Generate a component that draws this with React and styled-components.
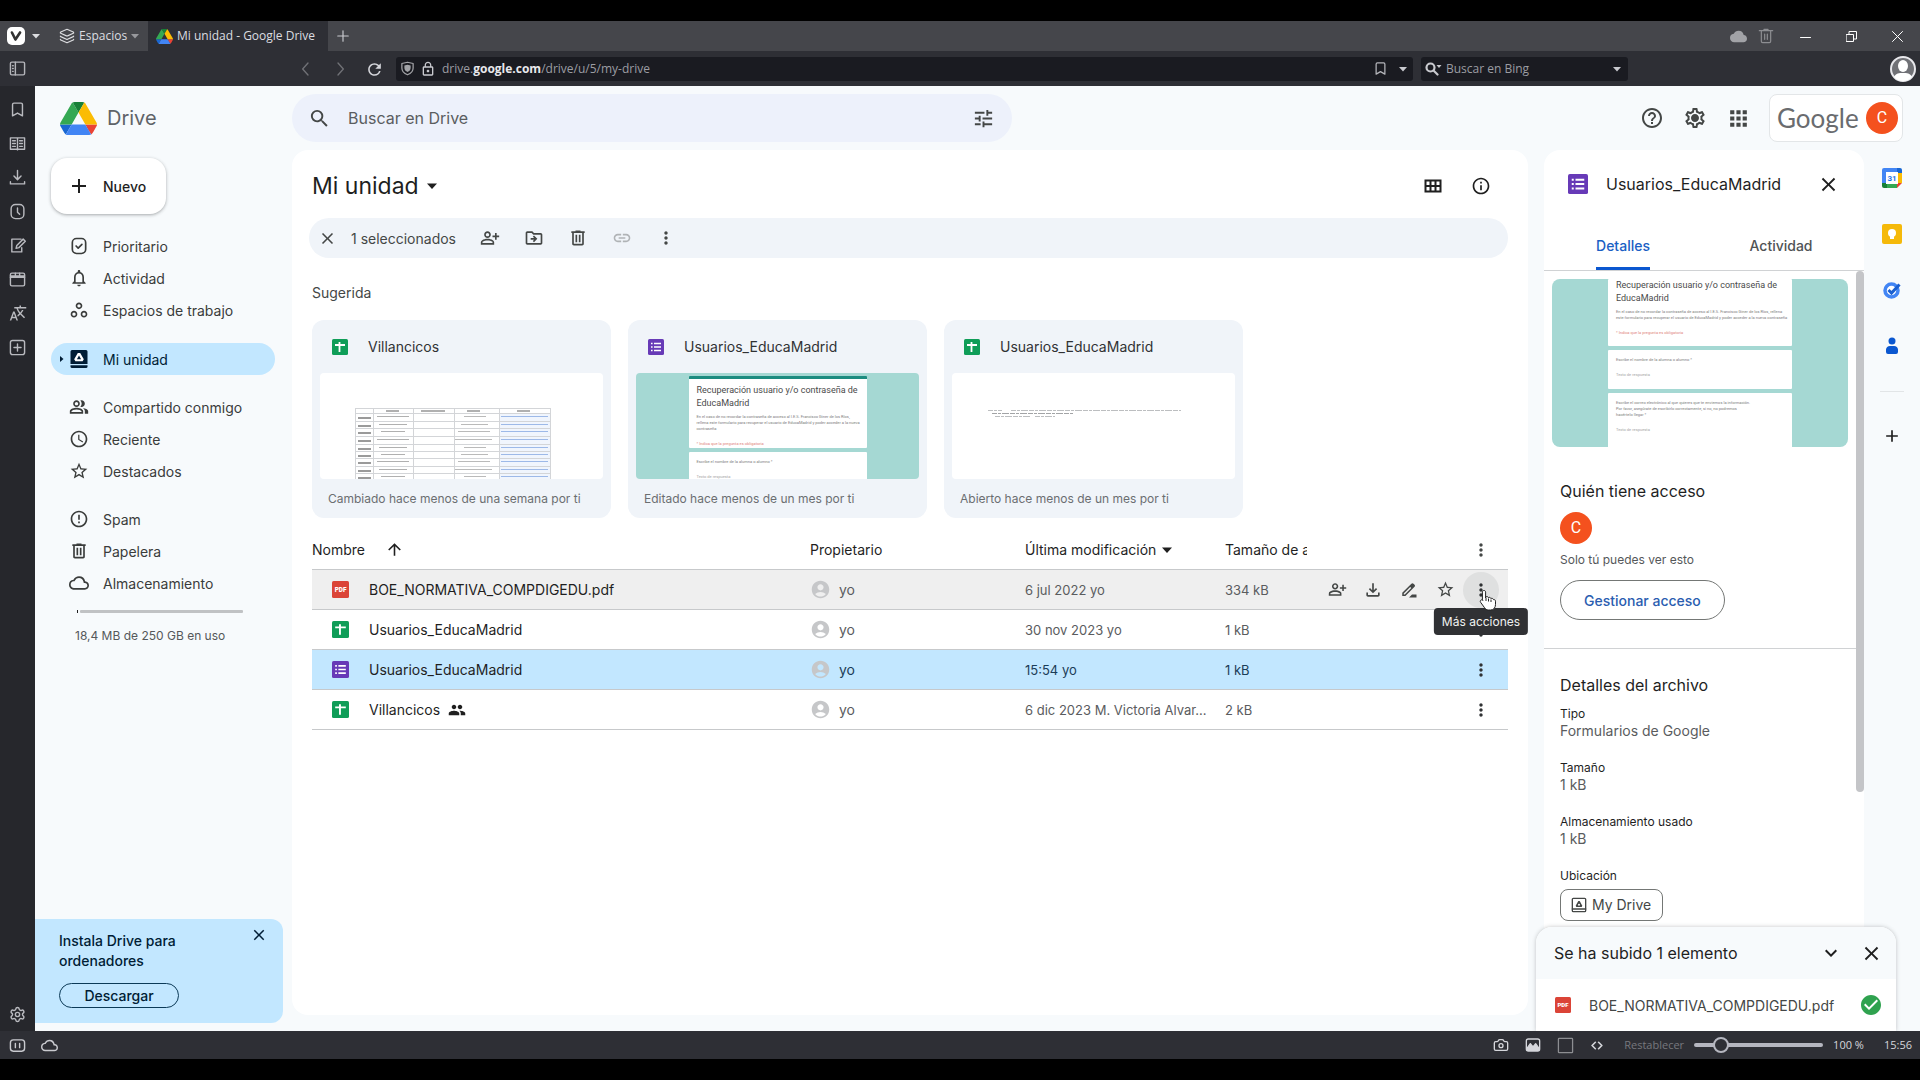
import React from "react";
import styled, { createGlobalStyle, css } from "styled-components";
import {
  MdSearch, MdTune, MdHelpOutline, MdOutlineSettings, MdApps, MdMoreVert, MdClose, MdAdd,
  MdArrowUpward, MdStarBorder, MdAccessTime, MdInfoOutline, MdOutlineFileDownload,
  MdOutlinePeopleAlt, MdPeople, MdNotificationsNone, MdLink, MdErrorOutline, MdCheckCircle,
  MdAccountCircle, MdOutlineCloud, MdCloud, MdOutlineDriveFileMove, MdOutlinePersonAddAlt,
  MdOutlineWorkspaces, MdKeyboardArrowDown, MdTranslate, MdLockOutline, MdRefresh,
} from "react-icons/md";
import { Bookmark, Settings, Layers, Camera } from "lucide-react";

const ui = `Inter, Roboto, "Liberation Sans", sans-serif`;
const chromeFont = `"Open Sans", "Noto Sans", "Liberation Sans", sans-serif`;

const GlobalStyle = createGlobalStyle`
  * { box-sizing: border-box; }
  body { margin: 0; background: #000; font-family: ${ui}; color: #1f1f1f; }
  button, input { font: inherit; color: inherit; }
  button { background: none; border: 0; padding: 0; cursor: pointer; }
  h1, h2, h3, p, dl, dd, ul { margin: 0; padding: 0; }
  ul { list-style: none; }
  a { color: inherit; text-decoration: none; }
  svg { display: block; flex: none; }
`;

/* ---------- shared drawings ---------- */

const Line = ({ size = 16, box = 24, width = 2, children, ...rest }) => (
  <svg width={size} height={size} viewBox={`0 0 ${box} ${box}`} fill="none" stroke="currentColor"
    strokeWidth={width} strokeLinecap="round" strokeLinejoin="round" aria-hidden="true" {...rest}>
    {children}
  </svg>
);

const Solid = ({ size = 20, d, ...rest }) => (
  <svg width={size} height={size} viewBox="0 0 24 24" fill="currentColor" fillRule="evenodd" aria-hidden="true" {...rest}>
    <path d={d} />
  </svg>
);

const TrashIcon = (p) => (
  <Solid {...p} d="M7 21q-.825 0-1.412-.587Q5 19.825 5 19V6H4V4h5V3h6v1h5v2h-1v13q0 .825-.587 1.413Q17.825 21 17 21ZM17 6H7v13h10ZM9 17h2V8H9Zm4 0h2V8h-2Z" />
);

const DriveMark = ({ size }) => (
  <svg width={size} height={size} viewBox="0 0 87.3 78" aria-hidden="true">
    <path d="m6.6 66.85 3.85 6.65c.8 1.4 1.95 2.5 3.3 3.3l13.75-23.8h-27.5c0 1.55.4 3.1 1.2 4.5z" fill="#1967d2" />
    <path d="m43.65 25-13.75-23.8c-1.35.8-2.5 1.9-3.3 3.3l-25.4 44a9.06 9.06 0 0 0 -1.2 4.5h27.5z" fill="#34a853" />
    <path d="m73.55 76.8c1.35-.8 2.5-1.9 3.3-3.3l1.6-2.75 7.65-13.25c.8-1.4 1.2-2.95 1.2-4.5h-27.502l5.852 11.5z" fill="#ea4335" />
    <path d="m43.65 25 13.75-23.8c-1.35-.8-2.9-1.2-4.5-1.2h-18.5c-1.6 0-3.15.45-4.5 1.2z" fill="#188038" />
    <path d="m59.8 53h-32.3l-13.75 23.8c1.35.8 2.9 1.2 4.5 1.2h50.8c1.6 0 3.15-.45 4.5-1.2z" fill="#4285f4" />
    <path d="m73.4 26.5-12.7-22c-.8-1.4-1.95-2.5-3.3-3.3l-13.75 23.8 16.15 28h27.45c0-1.55-.4-3.1-1.2-4.5z" fill="#fbbc04" />
  </svg>
);

const SheetIcon = ({ size = 16 }) => (
  <svg width={size} height={size} viewBox="0 0 16 16" role="img" aria-label="Hoja de cálculo">
    <rect width="16" height="16" rx="1.5" fill="#0f9d58" />
    <path d="M3 6h10M7.5 3v10" stroke="#fff" strokeWidth="1.8" />
  </svg>
);

const FormIcon = ({ size = 16 }) => (
  <svg width={size} height={size} viewBox="0 0 16 16" role="img" aria-label="Formulario">
    <rect width="16" height="16" rx="1.5" fill="#673ab7" />
    <path d="M6 4.5h7M6 8h7M6 11.5h7" stroke="#fff" strokeWidth="1.6" />
    <path d="M3 4.5h1.6M3 8h1.6M3 11.5h1.6" stroke="#fff" strokeWidth="1.6" />
  </svg>
);

const PdfIcon = ({ size = 16 }) => (
  <svg width={size} height={size} viewBox="0 0 16 16" role="img" aria-label="PDF">
    <rect width="16" height="16" rx="1.5" fill="#db4437" />
    <text x="8" y="10.4" textAnchor="middle" fill="#fff" fontSize="6" fontWeight="900" fontFamily="Roboto, sans-serif">PDF</text>
  </svg>
);

const Caret = ({ size = 10 }) => (
  <svg width={size} height={size} viewBox="0 0 10 10" fill="currentColor" aria-hidden="true"><path d="M0 2.5h10L5 8z" /></svg>
);

const IconButton = styled.button`
  display: grid;
  place-items: center;
  width: ${(p) => p.$size || 24}px;
  height: ${(p) => p.$size || 24}px;
  color: ${(p) => p.$color || "#444746"};
  flex: none;
`;

/* ---------- browser window ---------- */

const Window = styled.div`
  height: 100vh;
  min-height: 720px;
  padding: 21px 0;
  display: flex;
  flex-direction: column;
  background: #000;
`;

const TabBar = styled.div`
  height: 30px;
  flex: none;
  display: flex;
  align-items: stretch;
  background: #45464b;
  color: #dcdde0;
  font: 12px/30px ${chromeFont};
`;

const MenuButton = styled.button`
  display: flex;
  align-items: center;
  gap: 7px;
  width: 48px;
  padding-left: 7px;
`;

const VivaldiMark = styled.span`
  display: grid;
  place-items: center;
  width: 18px;
  height: 18px;
  border-radius: 5px;
  background: #fff;
  color: #333;
`;

const Spaces = styled.button`
  display: flex;
  align-items: center;
  gap: 4px;
  width: 100px;
  padding-left: 11px;
  svg:last-child { color: #97989c; }
`;

const Tab = styled.a`
  display: flex;
  align-items: center;
  gap: 4px;
  width: 180px;
  padding-left: 8px;
  background: #2e2f35;
  white-space: nowrap;
`;

const WindowTools = styled.div`
  margin-left: auto;
  display: flex;
  align-items: center;
  padding-right: 14px;
`;

const WindowButtons = styled.div`
  display: flex;
  gap: 28px;
  margin-left: 16px;
`;

const AddressBar = styled.div`
  height: 35px;
  flex: none;
  display: flex;
  align-items: center;
  padding: 0 4px 0 8px;
  background: #2e2f35;
  color: #c9cacf;
  font: 12px/24px ${chromeFont};
`;

const HistoryNav = styled.div`
  display: flex;
  align-items: center;
  gap: 16px;
  margin: 0 13px 0 271px;
`;

const UrlField = styled.div`
  flex: 1;
  height: 24px;
  display: flex;
  align-items: center;
  gap: 4px;
  padding: 0 1px 0 2px;
  border-radius: 3px;
  background: #1a1b21;
`;

const Url = styled.a`
  flex: 1;
  padding-left: 2px;
  color: #9c9da3;
  b { color: #e8e8ec; font-weight: 700; }
`;

const BingField = styled.label`
  display: flex;
  align-items: center;
  gap: 4px;
  width: 207px;
  height: 24px;
  margin: 0 262px 0 8px;
  padding: 0 7px 0 4px;
  border-radius: 3px;
  background: #1a1b21;
  input {
    flex: 1;
    min-width: 0;
    padding: 0;
    border: 0;
    outline: 0;
    background: none;
    &::placeholder { color: #9c9da3; opacity: 1; }
  }
`;

const Middle = styled.div`
  flex: 1;
  min-height: 0;
  display: flex;
`;

const SidePanel = styled.nav`
  width: 35px;
  flex: none;
  display: flex;
  flex-direction: column;
  align-items: center;
  gap: 14px;
  padding: 13px 0 7px;
  background: #26272c;
  > :last-child { margin-top: auto; }
`;

const Mirrored = styled.span`
  transform: scaleX(-1);
`;

const StatusBar = styled.footer`
  height: 28px;
  flex: none;
  display: flex;
  align-items: center;
  gap: 12px;
  padding: 0 8px 0 7px;
  background: #2e2f35;
  color: #d5d6db;
  font: 11px/28px ${chromeFont};
`;

const StatusRight = styled.div`
  margin-left: auto;
  display: flex;
  align-items: center;
  gap: 10px;
`;

const Reset = styled.button`
  margin-left: 6px;
  color: #77787e;
`;

const Clock = styled.time`
  margin-left: 10px;
`;

const ZoomSlider = styled.input`
  appearance: none;
  width: 129px;
  height: 16px;
  margin: 0;
  background: none;
  &::-webkit-slider-runnable-track { height: 4px; border-radius: 2px; background: #b5b6bf; }
  &::-webkit-slider-thumb {
    appearance: none;
    width: 16px;
    height: 16px;
    margin-top: -6px;
    border: 2px solid #b5b6bf;
    border-radius: 50%;
    background: #2e2f35;
  }
`;

/* ---------- Drive page ---------- */

const Page = styled.div`
  position: relative;
  flex: 1;
  min-width: 0;
  display: flex;
  flex-direction: column;
  overflow: hidden;
  background: #f7fafc;
`;

const Header = styled.header`
  height: 64px;
  flex: none;
  display: flex;
  align-items: center;
  padding-right: 17px;
`;

const Brand = styled.a`
  width: 257px;
  flex: none;
  display: flex;
  align-items: center;
  gap: 10px;
  padding-left: 25px;
  color: #5f6368;
  font-size: 20px;
`;

const SearchBox = styled.label`
  flex: 0 1 720px;
  height: 48px;
  display: flex;
  align-items: center;
  gap: 17px;
  padding: 0 17px 0 16px;
  border-radius: 24px;
  background: #edf1fb;
  color: #444746;
  input {
    flex: 1;
    min-width: 0;
    padding: 0;
    border: 0;
    outline: 0;
    background: none;
    font-size: 16px;
    &::placeholder { color: #5a5d60; opacity: 1; }
  }
`;

const HeaderTools = styled.div`
  display: flex;
  align-items: center;
  gap: 19px;
  margin-left: auto;
`;

const AccountCard = styled.a`
  display: flex;
  align-items: center;
  justify-content: space-between;
  width: 134px;
  height: 48px;
  padding: 0 4px 0 7px;
  border: 1px solid #e3e6e8;
  border-radius: 8px;
  background: #fff;
  color: #6a6c6f;
  font: 26px/32px Lato, sans-serif;
`;

const Avatar = styled.span`
  display: grid;
  place-items: center;
  width: 32px;
  height: 32px;
  border-radius: 50%;
  background: #f4511e;
  color: #fff;
  font: 16px/32px Roboto, sans-serif;
`;

const Body = styled.div`
  flex: 1;
  min-height: 0;
  display: flex;
`;

const Aside = styled.aside`
  width: 257px;
  flex: none;
  display: flex;
  flex-direction: column;
  padding: 8px 0;
`;

const NewButton = styled.button`
  align-self: flex-start;
  display: flex;
  align-items: center;
  gap: 12px;
  height: 56px;
  margin: 0 0 16px 16px;
  padding: 0 20px 0 16px;
  border-radius: 16px;
  background: #fff;
  box-shadow: 0 1px 3px rgba(60, 64, 67, 0.35), 0 1px 4px rgba(60, 64, 67, 0.1);
  font-size: 14px;
  font-weight: 500;
`;

const NavGroup = styled.ul`
  margin: 0 17px 16px 16px;
  &:last-of-type { margin-bottom: 0; }
  &:first-of-type { margin-bottom: 17px; }
`;

const NavLink = styled.a`
  display: grid;
  grid-template-columns: 18px 20px 1fr;
  align-items: center;
  height: 32px;
  border-radius: 16px;
  color: ${(p) => (p.$active ? "#001d35" : "#3a3c3b")};
  background: ${(p) => (p.$active ? "#c2e7ff" : "none")};
  font-size: 14px;
  svg { justify-self: center; }
  > span:last-child { padding-left: 14px; }
`;

const Storage = styled.div`
  margin: 11px 49px 0 40px;
  font-size: 12px;
  line-height: 20px;
  color: #55585a;
`;

const Meter = styled.div`
  display: flex;
  gap: 2px;
  height: 3px;
  margin: 0 0 13px 2px;
  &::before { content: ""; width: 1px; background: #1f1f1f; }
  &::after { content: ""; flex: 1; background: #c0c2c4; border-radius: 1px; }
`;

const Promo = styled.section`
  display: grid;
  grid-template-columns: 1fr auto;
  align-items: start;
  margin: auto 9px 0 0;
  padding: 12px 12px 15px 24px;
  border-radius: 0 12px 12px 0;
  background: #c2e7ff;
  color: #001d35;
  font-size: 14px;
  font-weight: 500;
  line-height: 20px;
  p { max-width: 150px; }
  > button { margin-top: -8px; }
`;

const PromoButton = styled.a`
  width: 120px;
  height: 25px;
  margin-top: 12px;
  border: 1px solid #0b3a57;
  border-radius: 13px;
  line-height: 23px;
  text-align: center;
`;

const Main = styled.main`
  flex: 1;
  min-width: 0;
  margin-bottom: 16px;
  padding: 4px 20px;
  border-radius: 16px;
  background: #fff;
`;

const TitleRow = styled.div`
  display: flex;
  align-items: center;
  gap: 24px;
  height: 64px;
  padding-right: 15px;
`;

const Crumb = styled.button`
  display: flex;
  align-items: center;
  gap: 8px;
  margin-right: auto;
  font-size: 23px;
`;

const Selection = styled.div`
  display: flex;
  align-items: center;
  gap: 24px;
  height: 40px;
  margin-left: -3px;
  padding-left: 8px;
  border-radius: 20px;
  background: #f0f4f9;
  color: #444746;
  font-size: 14px;
`;

const Count = styled.div`
  display: flex;
  align-items: center;
  gap: 14px;
`;

const SectionTitle = styled.h2`
  height: 62px;
  padding-top: 6px;
  font-size: 14px;
  font-weight: 400;
  line-height: 58px;
  color: #444746;
`;

const Cards = styled.div`
  display: flex;
  gap: 17px;
  margin-bottom: 12px;
`;

const Card = styled.article`
  width: 299px;
  padding: 0 8px;
  border-radius: 12px;
  background: #f0f4f9;
  h3 {
    display: flex;
    align-items: center;
    gap: 20px;
    height: 53px;
    padding-left: 12px;
    font-size: 14px;
    font-weight: 400;
    color: #303234;
  }
  p {
    padding-left: 8px;
    font-size: 12px;
    line-height: 39px;
    color: #6b6e71;
  }
`;

const Thumb = styled.div`
  height: 106px;
  overflow: hidden;
  border-radius: 4px;
  background: ${(p) => p.$color || "#fff"};
`;

const FormPage = styled.div`
  display: flex;
  flex-direction: column;
  gap: 4px;
  width: ${(p) => p.$width}px;
  margin: ${(p) => p.$top}px auto 0;
  color: #7c7c7c;
  font: 4px/6px Roboto, sans-serif;
`;

const FormBlock = styled.div`
  height: ${(p) => p.$height}px;
  padding: ${(p) => p.$pad}px 4px 0 8px;
  border-radius: 1px;
  background: #fff;
  ${(p) => p.$banner && css`border-top: 3px solid #1c8c80;`}
`;

const FormTitle = styled.div`
  margin-bottom: 4px;
  color: #4a4a4a;
  font-size: 9px;
  line-height: 13px;
  white-space: nowrap;
`;

const FormNote = styled.div`
  margin-top: 9px;
  color: ${(p) => (p.$required ? "#e0827a" : "#a5a5a5")};
`;

/* ---------- file table ---------- */

const Table = styled.table`
  width: 100%;
  table-layout: fixed;
  border-collapse: separate;
  border-spacing: 0;
  font-size: 14px;
`;

const Col = styled.col`
  width: ${(p) => (p.$width ? `${p.$width}px` : "auto")};
`;

const Head = styled.th`
  height: 40px;
  padding: 0;
  border-bottom: 1px solid #c7c9cb;
  font-weight: 400;
  text-align: left;
  white-space: nowrap;
  overflow: hidden;
  color: #1f1f1f;
`;

const Row = styled.tr`
  background: ${(p) => (p.$state === "selected" ? "#c2e7ff" : p.$state === "hover" ? "#efefef" : "none")};
  color: ${(p) => (p.$state === "selected" ? "#1b3d57" : "#5a5c5e")};
`;

const Cell = styled.td`
  height: 40px;
  padding: 0;
  border-bottom: 1px solid #c7c9cb;
  white-space: nowrap;
  ${(p) => p.$meta && css`font-size: 13px;`}
`;

const Inline = styled.span`
  display: flex;
  align-items: center;
  gap: ${(p) => p.$gap || 8}px;
`;

const FileName = styled(Inline)`
  padding-left: 20px;
  color: #1f1f1f;
`;

const Actions = styled.div`
  display: flex;
  align-items: center;
  justify-content: flex-end;
  gap: 12px;
  padding-right: 15px;
`;

const MoreWrap = styled.span`
  position: relative;
  width: 24px;
  height: 24px;
`;

const Halo = styled.span`
  position: absolute;
  inset: -6px;
  border-radius: 50%;
  background: #dfe0e0;
`;

const MoreIcon = styled(IconButton)`
  position: relative;
`;

const Tooltip = styled.span`
  position: absolute;
  z-index: 2;
  top: 30px;
  left: 50%;
  transform: translateX(-50%);
  padding: 0 8px;
  border-radius: 4px;
  background: #303134;
  color: #f1f1f1;
  font-size: 12px;
  line-height: 27px;
`;

const Pointer = styled.svg`
  position: absolute;
  z-index: 3;
  top: 11px;
  left: 10px;
`;

/* ---------- details ---------- */

const Details = styled.section`
  width: 320px;
  flex: none;
  display: flex;
  flex-direction: column;
  min-height: 0;
  margin: 0 0 16px 16px;
  border-radius: 16px;
  background: #fff;
  overflow: hidden;
`;

const DetailsHead = styled.div`
  height: 68px;
  flex: none;
  display: flex;
  align-items: center;
  gap: 18px;
  padding: 0 24px;
  h2 { flex: 1; font-size: 16px; font-weight: 400; }
`;

const Tabs = styled.div`
  flex: none;
  display: flex;
  height: 53px;
  padding-right: 4px;
  border-bottom: 1px solid #d0d2d4;
`;

const TabButton = styled.button`
  flex: 1;
  display: flex;
  justify-content: center;
  font-size: 14px;
  font-weight: 500;
  color: ${(p) => (p.$active ? "#1a5fc4" : "#505355")};
  span {
    height: 100%;
    line-height: 56px;
    border-bottom: 3px solid ${(p) => (p.$active ? "#0b57d0" : "transparent")};
  }
`;

const Scroller = styled.div`
  flex: 1;
  min-height: 0;
  display: flex;
`;

const ScrollBody = styled.div`
  flex: 1;
  overflow: hidden;
`;

const ScrollThumb = styled.div`
  width: 8px;
  height: 70%;
  border-radius: 4px;
  background: #c4c5c8;
`;

const Preview = styled(Thumb)`
  height: 168px;
  margin: 8px 8px 32px;
  border-radius: 8px;
`;

const Section = styled.div`
  padding: 0 16px;
  h3 { font-size: 16px; font-weight: 400; line-height: 24px; color: #1f1f1f; }
`;

const Access = styled(Section)`
  padding-bottom: 28px;
  border-bottom: 1px solid #d0d2d4;
  margin-bottom: 24px;
  > span { margin: 9px 0 8px; }
  p { font-size: 12px; line-height: 16px; color: #55585a; }
`;

const ManageButton = styled.button`
  height: 40px;
  margin-top: 12px;
  padding: 0 23px;
  border: 1px solid #747775;
  border-radius: 20px;
  color: #2a5db0;
  font-size: 14px;
  font-weight: 500;
`;

const Facts = styled.dl`
  margin-top: 9px;
  dt { font-size: 12px; line-height: 16px; color: #1f1f1f; }
  dd { margin-bottom: 20px; font-size: 14px; line-height: 18px; color: #5a5c5e; }
`;

const Chip = styled.button`
  display: flex;
  align-items: center;
  gap: 5px;
  height: 32px;
  margin-top: 5px;
  padding: 0 11px 0 10px;
  border: 1px solid #747775;
  border-radius: 8px;
  color: #444746;
`;

const AppStrip = styled.nav`
  width: 56px;
  flex: none;
  display: flex;
  flex-direction: column;
  align-items: center;
  gap: 36px;
  padding-top: 18px;
`;

const Rule = styled.hr`
  width: 24px;
  margin: -1px 0 -2px;
  border: 0;
  border-top: 1px solid #e2e5e7;
`;

const Toast = styled.section`
  position: absolute;
  right: 24px;
  bottom: 0;
  width: 360px;
  border-radius: 16px 16px 0 0;
  background: #fff;
  box-shadow: 0 0 4px rgba(60, 64, 67, 0.3);
`;

const ToastHead = styled.div`
  display: flex;
  align-items: center;
  gap: 16px;
  height: 52px;
  padding: 0 13px 0 18px;
  border-radius: 16px 16px 0 0;
  background: #f7fafc;
  h2 { flex: 1; font-size: 16px; font-weight: 400; color: #1f1f1f; }
`;

const ToastRow = styled.div`
  display: flex;
  align-items: center;
  gap: 18px;
  height: 52px;
  padding: 0 13px 0 19px;
  font-size: 14px;
  color: #444746;
  span { flex: 1; }
`;

/* ---------- icons drawn for this page ---------- */

const MyDriveFilled = () => (
  <svg width="18" height="20" viewBox="0 0 18 20" aria-hidden="true">
    <path d="M2 1h14a1.5 1.5 0 0 1 1.500 1.500V15H.5V2.500A1.500 1.500 0 0 1 2 1z" fill="#001d35" />
    <path d="M.5 16.300h17v1.200A1.500 1.500 0 0 1 16 19H2a1.500 1.500 0 0 1-1.500-1.500z" fill="#001d35" />
    <path d="M7.800 4h2.400l3.600 6.300-1.200 2H5.400l-1.200-2zM9 6.400 6.900 10.200h4.200z" fill="#fff" fillRule="evenodd" />
  </svg>
);

const MyDriveOutline = () => (
  <Line size={16} width={2}>
    <rect x="2" y="2" width="20" height="20" rx="1.500" />
    <path d="M2 18h20" />
    <path d="M11 6h2l4 7-1 2H8l-1-2z" fill="currentColor" stroke="none" />
    <circle cx="12" cy="11.500" r="1.500" fill="#fff" stroke="none" />
  </Line>
);

const PriorityIcon = () => (
  <Line size={20} width={2}><rect x="4" y="3" width="16" height="18" rx="5" /><path d="m8.500 12 2.500 2.500 4.500-4.500" /></Line>
);

const GearDot = () => (
  <svg width="24" height="24" viewBox="0 0 24 24" aria-hidden="true">
    <MdOutlineSettings size={24} />
    <circle cx="12" cy="12" r="3" fill="currentColor" />
  </svg>
);

const GridIcon = () => (
  <svg width="18" height="18" viewBox="0 0 18 18" fill="none" stroke="currentColor" strokeWidth="2" aria-hidden="true">
    <path d="M1.500 3.500h15v11h-15zM1.500 9h15M6.500 3.500v11M11.500 3.500v11" />
  </svg>
);

const EditLineIcon = () => (
  <Solid size={18} d="M12 22l4-4h6v4zM5 18h1.400l8.600-8.600L13.600 8 5 16.600zm-2 2v-4.200L15.200 3.600q.6-.6 1.400-.6t1.400.6l1.400 1.400q.6.6.6 1.400t-.6 1.400L7.200 20z" />
);

const BingSearchIcon = () => (
  <svg width="17" height="14" viewBox="0 0 17 14" fill="none" stroke="currentColor" strokeWidth="2.200" aria-hidden="true">
    <circle cx="5.500" cy="5.500" r="4" /><path d="m8.500 8.500 4 4" strokeLinecap="round" />
    <path d="M11.500 3h5L14 6z" fill="currentColor" stroke="none" />
  </svg>
);

const Hand = () => (
  <Pointer width="18" height="22" viewBox="0 0 18 22" aria-hidden="true">
    <path d="M5 1.500c1 0 1.600.7 1.600 1.600V9l.3-1.200c1-.6 2.200-.2 2.500.8 1-.6 2.200-.1 2.500.9 1-.5 2.300 0 2.600 1.100 1.200-.2 2 .5 2 1.600v3.200c0 3.200-1.700 5.600-4.900 5.600H9.400c-1.700 0-2.900-.9-3.800-2.200l-4-5.500c-.6-.9-.4-1.800.3-2.200.7-.5 1.500-.2 2.100.4l-.6-.7V3.100c0-.9.700-1.600 1.600-1.600z"
      fill="#fff" stroke="#222" strokeWidth="1" />
    <path d="M7 9v3M9.500 9.500v3M12 10.500v2.500" stroke="#222" strokeWidth="1" />
  </Pointer>
);

const CalendarApp = () => (
  <svg width="20" height="20" viewBox="0 0 20 20" role="img" aria-label="Calendar">
    <path d="M0 2a2 2 0 0 1 2-2h13v5H5v10H0z" fill="#4285f4" />
    <path d="M15 0h3a2 2 0 0 1 2 2v3h-5z" fill="#1967d2" />
    <path d="M15 5h5v10h-5z" fill="#fbbc04" />
    <path d="M5 15h10v5H5z" fill="#34a853" />
    <path d="M0 15h5v5H2a2 2 0 0 1-2-2z" fill="#188038" />
    <path d="M15 15h5l-5 5z" fill="#ea4335" />
    <rect x="4" y="4" width="12" height="12" fill="#fff" />
    <text x="10" y="13" textAnchor="middle" fontSize="8" fontWeight="700" fill="#1a73e8" fontFamily="Roboto, sans-serif">31</text>
  </svg>
);

const KeepApp = () => (
  <svg width="20" height="20" viewBox="0 0 20 20" role="img" aria-label="Keep">
    <rect width="20" height="20" rx="2" fill="#f5b90a" />
    <circle cx="10" cy="9" r="4" fill="#fff" /><path d="M8 12h4v3H8z" fill="#fff" />
  </svg>
);

const TasksApp = () => (
  <svg width="20" height="20" viewBox="0 0 20 20" role="img" aria-label="Tasks">
    <circle cx="9.500" cy="10.500" r="6.500" fill="#fff" stroke="#4285f4" strokeWidth="3.500" />
    <path d="m6.500 10 3 3L17.500 4.500" fill="none" stroke="#1a5fd0" strokeWidth="3" />
  </svg>
);

const ContactsApp = () => (
  <svg width="20" height="20" viewBox="0 0 20 20" fill="#0b57d0" role="img" aria-label="Contactos">
    <circle cx="10" cy="5" r="3.500" /><path d="M4 13.500a4 4 0 0 1 4-3.500h4a4 4 0 0 1 4 3.500V16a2 2 0 0 1-2 2H6a2 2 0 0 1-2-2z" />
  </svg>
);

const SheetPreview = () => {
  const cols = [35, 53, 93, 134, 179, 230];
  const rows = [35, 40, 48, 55, 63, 71, 78, 85, 93, 100];
  return (
    <svg width="283" height="106" viewBox="0 0 283 106" aria-hidden="true">
      <rect x="179" y="40" width="51" height="66" fill="#f0f5fd" />
      <path d={cols.map((x) => `M${x}.5 35V106`).join("") + rows.map((y) => `M35 ${y}.5H231`).join("")} stroke="#d3d5d8" strokeWidth="1" fill="none" />
      {[66, 101, 147, 197].map((x, i) => <rect key={x} x={x} y="37" width={i === 1 ? 24 : 13} height="2" fill="#b0b0b0" />)}
      {rows.slice(1).map((y, i) => (
        <g key={y}>
          <rect x="38" y={y + 4} width="13" height="2" fill="#9a9a9a" />
          <rect x={57 + (i % 3) * 2} y={y + 3} width={32 - (i % 3) * 4} height="1" fill="#b0b0b0" />
          <rect x={144 - (i % 4) * 3} y={y + 3} width={22 + (i % 4) * 5} height="1" fill="#bababa" />
          <rect x="181" y={y + 3} width="47" height="1" fill="#9db9e8" />
        </g>
      ))}
    </svg>
  );
};

const ListPreview = () => (
  <svg width="283" height="106" viewBox="0 0 283 106" aria-hidden="true">
    <g stroke="#bcbec0" strokeWidth="1" strokeDasharray="5 1 3 1 7 1">
      <path d="M36 37.500h14M59 37.500h170" /><path d="M40 40.500h82" stroke="#a2a4a6" /><path d="M43 43.500h36M83 43.500h20" />
    </g>
  </svg>
);

/* ---------- data ---------- */

const nav = [
  [
    { label: "Prioritario", icon: <PriorityIcon /> },
    { label: "Actividad", icon: <MdNotificationsNone size={20} /> },
    { label: "Espacios de trabajo", icon: <MdOutlineWorkspaces size={20} /> },
  ],
  [{ label: "Mi unidad", icon: <MyDriveFilled />, active: true }],
  [
    { label: "Compartido conmigo", icon: <MdOutlinePeopleAlt size={20} /> },
    { label: "Reciente", icon: <MdAccessTime size={20} /> },
    { label: "Destacados", icon: <MdStarBorder size={20} /> },
  ],
  [
    { label: "Spam", icon: <MdErrorOutline size={20} /> },
    { label: "Papelera", icon: <TrashIcon size={20} /> },
    { label: "Almacenamiento", icon: <MdOutlineCloud size={20} /> },
  ],
];

const files = [
  { name: "BOE_NORMATIVA_COMPDIGEDU.pdf", icon: PdfIcon, date: "6 jul 2022", by: "yo", size: "334 kB", state: "hover" },
  { name: "Usuarios_EducaMadrid", icon: SheetIcon, date: "30 nov 2023", by: "yo", size: "1 kB" },
  { name: "Usuarios_EducaMadrid", icon: FormIcon, date: "15:54", by: "yo", size: "1 kB", state: "selected" },
  { name: "Villancicos", icon: SheetIcon, date: "6 dic 2023", by: "M. Victoria Alvar...", size: "2 kB", shared: true },
];

const FormDocument = ({ width, top, banner }) => (
  <FormPage $width={width} $top={top}>
    <FormBlock $height={banner ? 72 : 67} $pad={banner ? 5 : 0} $banner={banner}>
      <FormTitle>Recuperación usuario y/o contraseña de<br />EducaMadrid</FormTitle>
      En el caso de no recordar la contraseña de acceso al I.E.S. Francisco Giner de los Ríos, rellena este formulario para recuperar el usuario de EducaMadrid y poder acceder a la nueva contraseña
      <FormNote $required>* Indica que la pregunta es obligatoria</FormNote>
    </FormBlock>
    <FormBlock $height={39} $pad={7}>
      Escribe el nombre de la alumna o alumno *
      <FormNote>Texto de respuesta</FormNote>
    </FormBlock>
    {!banner && (
      <FormBlock $height={60} $pad={7}>
        Escribe el correo electrónico al que quieres que te enviemos la información.<br />
        Por favor, asegúrate de escribirlo correctamente, si no, no podremos<br />
        hacértelo llegar *
        <FormNote>Texto de respuesta</FormNote>
      </FormBlock>
    )}
  </FormPage>
);

export default function App() {
  return (
    <>
      <GlobalStyle />
      <Window>
        <TabBar>
          <MenuButton aria-label="Vivaldi">
            <VivaldiMark><Line size={14} width={4.5}><path d="m5 6 6 12 M11 18 19 6" /></Line></VivaldiMark>
            <Caret size={8} />
          </MenuButton>
          <Spaces><Layers size={16} strokeWidth={1.75} />Espacios<Caret size={8} /></Spaces>
          <Tab href="#tab"><DriveMark size={17} />Mi unidad - Google Drive</Tab>
          <IconButton $size={30} $color="#c9cacf" aria-label="Nueva pestaña"><Line size={14} width={2}><path d="M12 3v18M3 12h18" /></Line></IconButton>
          <WindowTools>
            <IconButton $size={28} $color="#a2a3a7" aria-label="Sincronización"><MdCloud size={17} /></IconButton>
            <IconButton $size={28} $color="#8d8e92" aria-label="Pestañas cerradas">
              <Line size={16} width={1.8}><path d="M2 4h20M9 4V2h6v2M5 4v16a2 2 0 0 0 2 2h10a2 2 0 0 0 2-2V4M10 9v8M14 9v8" /></Line>
            </IconButton>
            <WindowButtons>
              <IconButton $size={18} $color="#fff" aria-label="Minimizar"><Line size={11} box={11} width={1}><path d="M.5 6.500h10" /></Line></IconButton>
              <IconButton $size={18} $color="#fff" aria-label="Restaurar"><Line size={11} box={11} width={1}><path d="M.5 3.500h7v7h-7zM3 3.500V.5h7.500V8H7.500" /></Line></IconButton>
              <IconButton $size={18} $color="#fff" aria-label="Cerrar"><Line size={11} box={11} width={1}><path d="m.5.5 10 10M10.500.5l-10 10" /></Line></IconButton>
            </WindowButtons>
          </WindowTools>
        </TabBar>

        <AddressBar>
          <IconButton $size={18} $color="#b4b5ba" aria-label="Panel">
            <Line size={17} width={2}><rect x="2" y="3" width="20" height="18" rx="2" /><path d="M9 3v18M5 8h1M5 12h1M5 16h1" /></Line>
          </IconButton>
          <HistoryNav>
            <IconButton $size={18} $color="#707176" aria-label="Atrás"><Line size={16}><path d="m15 3-8 9 8 9" /></Line></IconButton>
            <IconButton $size={18} $color="#707176" aria-label="Adelante"><Line size={16}><path d="m9 3 8 9-8 9" /></Line></IconButton>
            <IconButton $size={18} $color="#d5d6db" aria-label="Recargar"><MdRefresh size={19} /></IconButton>
          </HistoryNav>
          <UrlField>
            <IconButton $size={18} $color="#a2a3a7" aria-label="Bloqueador">
              <Line size={15}><path d="M12 2 3 4v7c0 5 4 9 9 11 5-2 9-6 9-11V4z" /><path d="M12 6 7 7v4c0 3 2 5 5 6.500 3-1.500 5-3.500 5-6.500V7z" fill="currentColor" stroke="none" /></Line>
            </IconButton>
            <MdLockOutline size={16} />
            <Url href="#url">drive.<b>google.com</b>/drive/u/5/my-drive</Url>
            <IconButton $size={20} $color="#b4b5ba" aria-label="Guardar marcador"><Bookmark size={15} /></IconButton>
            <IconButton $size={18} $color="#c9cacf" aria-label="Historial de direcciones"><Caret size={8} /></IconButton>
          </UrlField>
          <BingField>
            <BingSearchIcon />
            <input placeholder="Buscar en Bing" aria-label="Buscar en Bing" />
            <Caret size={8} />
          </BingField>
          <svg width="26" height="26" viewBox="0 0 26 26" role="img" aria-label="Perfil">
            <circle cx="13" cy="13" r="12" fill="#707176" stroke="#e8e8ec" strokeWidth="2" />
            <ellipse cx="13" cy="10" rx="5" ry="6" fill="#fff" />
            <path d="M4 21c2-4 5-4 9-4s7 0 9 4a12 12 0 0 1-18 0z" fill="#fff" />
          </svg>
        </AddressBar>

        <Middle>
          <SidePanel aria-label="Paneles">
            <IconButton $size={20} $color="#b9babf" aria-label="Marcadores"><Bookmark size={17} /></IconButton>
            <IconButton $size={20} $color="#b9babf" aria-label="Lista de lectura">
              <Line size={17}><path d="M2 4h20v16H2zM12 4v17M5 8h4M5 12h4M5 16h4M15 8h4M15 12h4M15 16h4" /></Line>
            </IconButton>
            <IconButton $size={20} $color="#b9babf" aria-label="Descargas"><Line size={17}><path d="M12 2v13M7 10l5 5 5-5M2 18v3h20v-3" /></Line></IconButton>
            <IconButton $size={20} $color="#b9babf" aria-label="Historial"><Line size={17}><rect x="3" y="2" width="18" height="20" rx="6" /><path d="M12 7v6l3 3" /></Line></IconButton>
            <IconButton $size={20} $color="#b9babf" aria-label="Notas"><Line size={17}><path d="M17 3H4v18h14v-6" /><path d="m10 16 1-4 9-9 3 3-9 9z" /></Line></IconButton>
            <IconButton $size={20} $color="#b9babf" aria-label="Ventana"><Line size={17}><rect x="2" y="3" width="20" height="18" rx="2" /><path d="M2 9h20M2 7h20M9 3v4M15 3v4" /></Line></IconButton>
            <IconButton $size={20} $color="#b9babf" aria-label="Traducir"><Mirrored><MdTranslate size={18} /></Mirrored></IconButton>
            <IconButton $size={20} $color="#b9babf" aria-label="Añadir panel"><Line size={17}><rect x="2" y="2" width="20" height="20" rx="3" /><path d="M12 7v10M7 12h10" /></Line></IconButton>
            <IconButton $size={20} $color="#b9babf" aria-label="Ajustes"><Settings size={17} /></IconButton>
          </SidePanel>

          <Page>
            <Header>
              <Brand href="#drive"><DriveMark size={37} />Drive</Brand>
              <SearchBox>
                <MdSearch size={23} />
                <input placeholder="Buscar en Drive" aria-label="Buscar en Drive" />
                <MdTune size={23} />
              </SearchBox>
              <HeaderTools>
                <IconButton aria-label="Ayuda"><MdHelpOutline size={24} /></IconButton>
                <IconButton aria-label="Configuración"><GearDot /></IconButton>
                <IconButton aria-label="Aplicaciones"><MdApps size={25} /></IconButton>
                <AccountCard href="#account">Google<Avatar>C</Avatar></AccountCard>
              </HeaderTools>
            </Header>

            <Body>
              <Aside>
                <NewButton><MdAdd size={24} />Nuevo</NewButton>
                {nav.map((group) => (
                  <NavGroup key={group[0].label}>
                    {group.map((item) => (
                      <li key={item.label}>
                        <NavLink href="#nav" $active={item.active}>
                          <span>{item.active && <svg width="18" height="8" viewBox="0 0 18 8" aria-hidden="true"><path d="M9 1v6l3.500-3z" fill="#001d35" /></svg>}</span>
                          {item.icon}
                          <span>{item.label}</span>
                        </NavLink>
                      </li>
                    ))}
                  </NavGroup>
                ))}
                <Storage><Meter />18,4 MB de 250 GB en uso</Storage>
                <Promo>
                  <p>Instala Drive para ordenadores</p>
                  <IconButton $size={24} $color="#001d35" aria-label="Cerrar aviso"><MdClose size={18} /></IconButton>
                  <PromoButton href="#download">Descargar</PromoButton>
                </Promo>
              </Aside>

              <Main>
                <TitleRow>
                  <Crumb>Mi unidad<Caret size={10} /></Crumb>
                  <IconButton $color="#1f1f1f" aria-label="Vista de cuadrícula"><GridIcon /></IconButton>
                  <IconButton $color="#1f1f1f" aria-label="Ver detalles"><MdInfoOutline size={20} /></IconButton>
                </TitleRow>
                <Selection>
                  <Count><IconButton $size={20} aria-label="Anular selección"><MdClose size={19} /></IconButton>1 seleccionados</Count>
                  <IconButton $size={20} aria-label="Compartir"><MdOutlinePersonAddAlt size={20} /></IconButton>
                  <IconButton $size={20} aria-label="Mover"><MdOutlineDriveFileMove size={20} /></IconButton>
                  <IconButton $size={20} aria-label="Eliminar"><TrashIcon size={20} /></IconButton>
                  <IconButton $size={20} $color="#b0b3b6" aria-label="Copiar enlace"><MdLink size={20} /></IconButton>
                  <IconButton $size={20} aria-label="Más acciones"><MdMoreVert size={20} /></IconButton>
                </Selection>
                <SectionTitle>Sugerida</SectionTitle>
                <Cards>
                  <Card>
                    <h3><SheetIcon />Villancicos</h3>
                    <Thumb><SheetPreview /></Thumb>
                    <p>Cambiado hace menos de una semana por ti</p>
                  </Card>
                  <Card>
                    <h3><FormIcon />Usuarios_EducaMadrid</h3>
                    <Thumb $color="#a5d8d3"><FormDocument width={178} top={3} banner /></Thumb>
                    <p>Editado hace menos de un mes por ti</p>
                  </Card>
                  <Card>
                    <h3><SheetIcon />Usuarios_EducaMadrid</h3>
                    <Thumb><ListPreview /></Thumb>
                    <p>Abierto hace menos de un mes por ti</p>
                  </Card>
                </Cards>

                <Table>
                  <colgroup><Col /><Col $width={215} /><Col $width={200} /><Col $width={82} /><Col $width={201} /></colgroup>
                  <thead>
                    <tr>
                      <Head><Inline $gap={20}>Nombre<MdArrowUpward size={19} /></Inline></Head>
                      <Head>Propietario</Head>
                      <Head><Inline $gap={6}>Última modificación<Caret size={10} /></Inline></Head>
                      <Head>Tamaño de archivo</Head>
                      <Head><Actions><IconButton aria-label="Opciones de columna"><MdMoreVert size={20} /></IconButton></Actions></Head>
                    </tr>
                  </thead>
                  <tbody>
                    {files.map((f, i) => (
                      <Row key={i} $state={f.state}>
                        <Cell><FileName $gap={20}><f.icon size={17} /><Inline>{f.name}{f.shared && <MdPeople size={18} />}</Inline></FileName></Cell>
                        <Cell><Inline><MdAccountCircle size={21} color="#c6c7c9" />yo</Inline></Cell>
                        <Cell $meta>{f.date} {f.by}</Cell>
                        <Cell $meta>{f.size}</Cell>
                        <Cell>
                          <Actions>
                            {f.state === "hover" && (
                              <>
                                <IconButton aria-label="Compartir"><MdOutlinePersonAddAlt size={19} /></IconButton>
                                <IconButton aria-label="Descargar"><MdOutlineFileDownload size={20} /></IconButton>
                                <IconButton aria-label="Cambiar nombre"><EditLineIcon /></IconButton>
                                <IconButton aria-label="Destacar"><MdStarBorder size={19} /></IconButton>
                              </>
                            )}
                            <MoreWrap>
                              {f.state === "hover" && <Halo />}
                              <MoreIcon $color="#303234" aria-label="Más acciones"><MdMoreVert size={20} /></MoreIcon>
                              {f.state === "hover" && (<><Tooltip role="tooltip">Más acciones</Tooltip><Hand /></>)}
                            </MoreWrap>
                          </Actions>
                        </Cell>
                      </Row>
                    ))}
                  </tbody>
                </Table>
              </Main>

              <Details>
                <DetailsHead>
                  <FormIcon size={20} />
                  <h2>Usuarios_EducaMadrid</h2>
                  <IconButton $color="#1f1f1f" aria-label="Cerrar detalles"><MdClose size={23} /></IconButton>
                </DetailsHead>
                <Tabs role="tablist">
                  <TabButton role="tab" aria-selected="true" $active><span>Detalles</span></TabButton>
                  <TabButton role="tab" aria-selected="false"><span>Actividad</span></TabButton>
                </Tabs>
                <Scroller>
                  <ScrollBody>
                    <Preview $color="#a5d8d3"><FormDocument width={184} top={0} /></Preview>
                    <Access>
                      <h3>Quién tiene acceso</h3>
                      <Avatar>C</Avatar>
                      <p>Solo tú puedes ver esto</p>
                      <ManageButton>Gestionar acceso</ManageButton>
                    </Access>
                    <Section>
                      <h3>Detalles del archivo</h3>
                      <Facts>
                        <dt>Tipo</dt><dd>Formularios de Google</dd>
                        <dt>Tamaño</dt><dd>1 kB</dd>
                        <dt>Almacenamiento usado</dt><dd>1 kB</dd>
                        <dt>Ubicación</dt><dd><Chip><MyDriveOutline />My Drive</Chip></dd>
                      </Facts>
                    </Section>
                  </ScrollBody>
                  <ScrollThumb />
                </Scroller>
              </Details>

              <AppStrip aria-label="Panel lateral">
                <CalendarApp />
                <KeepApp />
                <TasksApp />
                <ContactsApp />
                <Rule />
                <MdAdd size={20} />
              </AppStrip>
            </Body>

            <Toast>
              <ToastHead>
                <h2>Se ha subido 1 elemento</h2>
                <IconButton $color="#1f1f1f" aria-label="Contraer"><MdKeyboardArrowDown size={24} /></IconButton>
                <IconButton $color="#1f1f1f" aria-label="Cerrar"><MdClose size={23} /></IconButton>
              </ToastHead>
              <ToastRow><PdfIcon /><span>BOE_NORMATIVA_COMPDIGEDU.pdf</span><MdCheckCircle size={24} color="#2fa24f" /></ToastRow>
            </Toast>
          </Page>
        </Middle>

        <StatusBar>
          <IconButton $size={20} $color="#c9cacf" aria-label="Pausar"><Line size={17}><rect x="2" y="4" width="20" height="16" rx="4" /><path d="M9 9v6M15 9v6" /></Line></IconButton>
          <IconButton $size={20} $color="#c9cacf" aria-label="Sincronizar"><MdOutlineCloud size={17} /></IconButton>
          <StatusRight>
            <IconButton $size={22} $color="#d5d6db" aria-label="Capturar"><Camera size={16} /></IconButton>
            <IconButton $size={22} $color="#d5d6db" aria-label="Imágenes">
              <Line size={16}><rect x="2" y="3" width="20" height="18" rx="3" /><path d="m3 17 5-7 4 5 4-5 5 7v3H3z" fill="currentColor" /></Line>
            </IconButton>
            <IconButton $size={22} $color="#8d8e92" aria-label="Mosaico"><Line size={17} width={1.8}><rect x="2" y="2" width="20" height="20" rx="1" /></Line></IconButton>
            <IconButton $size={22} $color="#d5d6db" aria-label="Efectos"><Line size={13} width={3}><path d="M8 6 2 12l6 6M14 6l6 6-6 6" /></Line></IconButton>
            <Reset>Restablecer</Reset>
            <ZoomSlider type="range" min="0" max="100" defaultValue="17" aria-label="Zoom" />
            <span>100 %</span>
            <Clock>15:56</Clock>
          </StatusRight>
        </StatusBar>
      </Window>
    </>
  );
}
